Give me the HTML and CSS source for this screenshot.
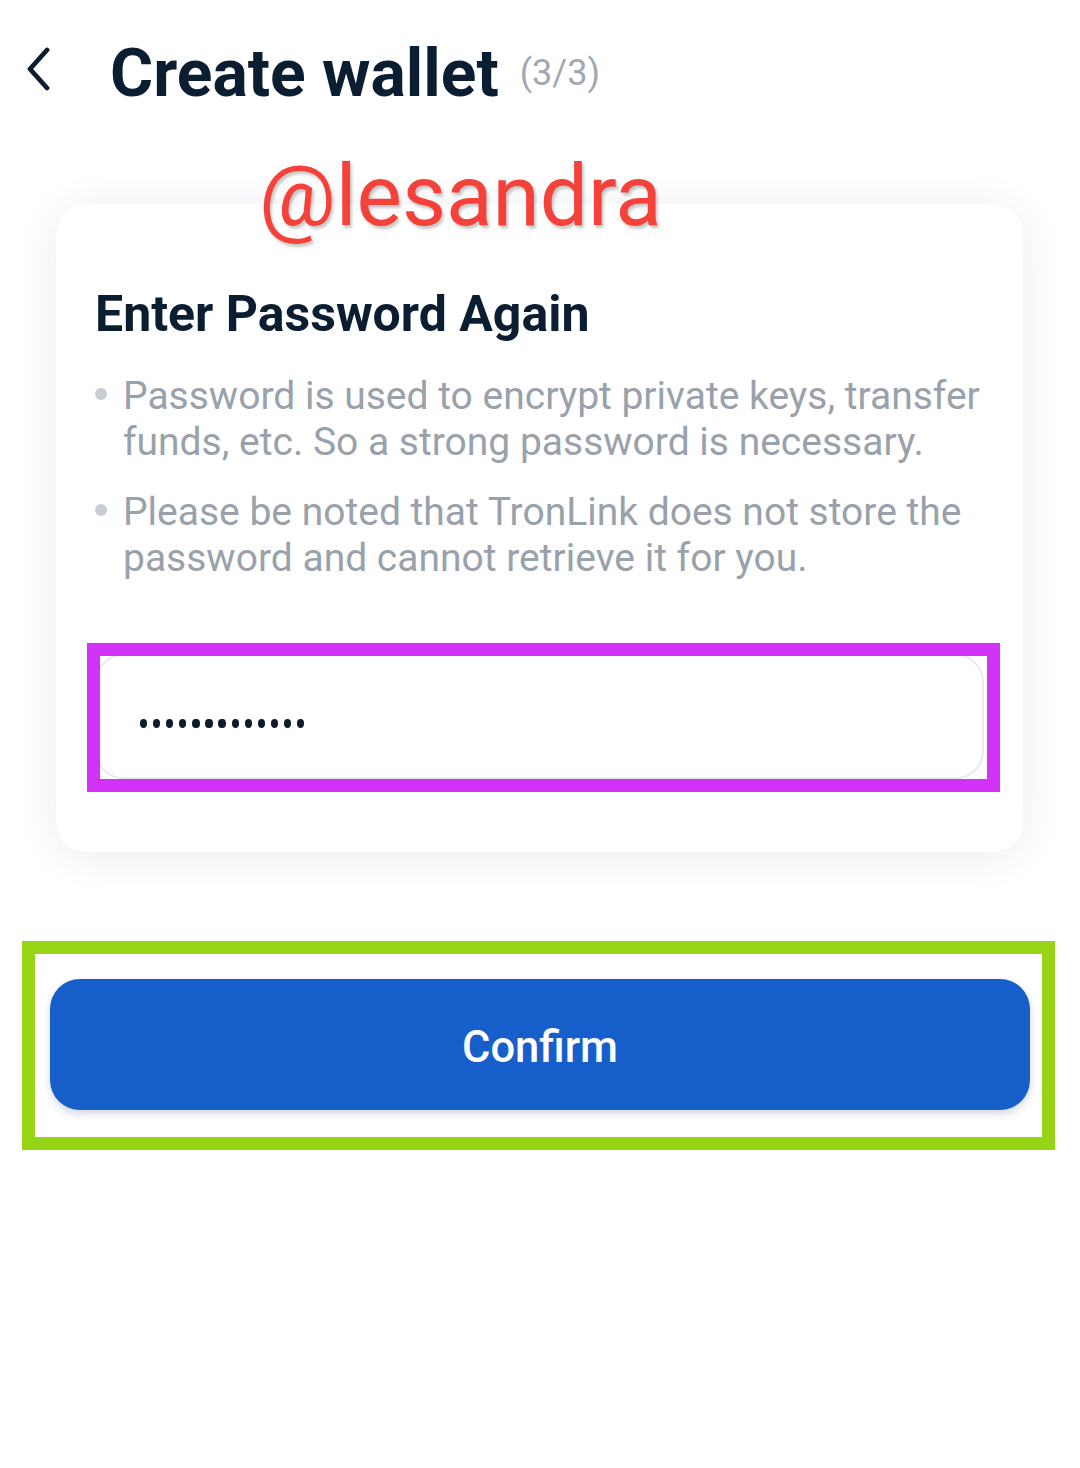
FILE: index.html
```html
<!DOCTYPE html>
<html lang="en">
<head>
<meta charset="utf-8">
<title>Create wallet</title>
<link rel="stylesheet" href="styles.css">
</head>
<body>
<div class="page">
  <header class="header">
    <svg class="back" width="24" height="44" viewBox="0 0 24 44" aria-hidden="true">
      <path d="M21 3 L4 22 L21 41" fill="none" stroke="#0d1d30" stroke-width="4.8" stroke-linecap="round" stroke-linejoin="round"/>
    </svg>
    <div class="title-group">
      <h1 class="title">Create wallet</h1>
      <span class="step">(3/3)</span>
    </div>
  </header>

  <section class="card">
    <h2 class="card-title">Enter Password Again</h2>
    <ul class="notes">
      <li class="note">Password is used to encrypt private keys, transfer funds, etc. So a strong password is necessary.</li>
      <li class="note">Please be noted that TronLink does not store the password and cannot retrieve it for you.</li>
    </ul>
    <div class="field">
      <div class="dots">
        <span class="dot"></span><span class="dot"></span><span class="dot"></span><span class="dot"></span><span class="dot"></span><span class="dot"></span><span class="dot"></span><span class="dot"></span><span class="dot"></span><span class="dot"></span><span class="dot"></span><span class="dot"></span><span class="dot"></span>
      </div>
    </div>
  </section>

  <button class="confirm" type="button">Confirm</button>

  <div class="watermark">@lesandra</div>
  <div class="frame frame-field"></div>
  <div class="frame frame-button"></div>
</div>
</body>
</html>
```

FILE: styles.css
```css
* {
  box-sizing: border-box;
}

html, body {
  margin: 0;
  padding: 0;
  background: #ffffff;
}

body {
  font-family: Roboto, "Noto Sans", "Liberation Sans", sans-serif;
  color: #0c1d31;
}

.page {
  position: relative;
  width: 1080px;
  height: 1468px;
  overflow: hidden;
  background: #ffffff;
}

/* Header */
.header {
  display: flex;
  align-items: flex-start;
  padding: 41px 0 0 26px;
  height: 106px;
}

.back {
  display: block;
  margin-top: 6px;
  flex: none;
}

.title-group {
  display: flex;
  align-items: baseline;
  margin-left: 60px;
}

.title {
  margin: 0;
  font-size: 66px;
  line-height: 65px;
  font-weight: 700;
  color: #0b1d31;
  letter-spacing: 0;
}

.step {
  margin-left: 21px;
  font-size: 36px;
  color: #a3a8b0;
  font-weight: 400;
  position: relative;
  top: -11px;
}

/* Card */
.card {
  margin: 98px 57px 0 56px;
  padding: 80px 39px 73px 39px;
  background: #ffffff;
  border-radius: 30px;
  box-shadow: 0 4px 40px rgba(40, 55, 110, 0.09);
}

.card-title {
  margin: 0;
  font-size: 50px;
  line-height: 60px;
  font-weight: 700;
  color: #0b1d31;
}

.notes {
  list-style: none;
  margin: 29px 0 0 0;
  padding: 0;
}

.note {
  position: relative;
  padding-left: 28px;
  font-size: 39px;
  line-height: 46px;
  color: #99a1ab;
}

.note + .note {
  margin-top: 24px;
}

.note::before {
  content: "";
  position: absolute;
  left: 0;
  top: 15px;
  width: 12px;
  height: 12px;
  border-radius: 50%;
  background: #c9cdd6;
}

.field {
  margin-top: 73px;
  height: 125px;
  border: 2px solid #e9eaee;
  border-radius: 28px;
  display: flex;
  align-items: center;
  padding: 14px 0 0 43px;
}

.dots {
  display: flex;
  gap: 5.9px;
}

.dot {
  width: 7.2px;
  height: 8.5px;
  border-radius: 50%;
  background: #0d1b2c;
}

/* Button */
.confirm {
  display: flex;
  align-items: center;
  justify-content: center;
  width: 980px;
  height: 131px;
  margin: 127px 0 0 50px;
  padding: 5px 0 0 0;
  border: none;
  border-radius: 30px;
  background: #165ec9;
  color: #ffffff;
  font-family: Roboto, "Noto Sans", "Liberation Sans", sans-serif;
  font-size: 43.5px;
  font-weight: 500;
  box-shadow: 0 4px 8px rgba(20, 40, 90, 0.18);
  cursor: pointer;
}

/* Annotations overlaid on the screenshot */
.watermark {
  position: absolute;
  left: 259px;
  top: 154px;
  font-size: 85.5px;
  line-height: 85px;
  font-weight: 400;
  color: #f4423a;
  text-shadow: 2px 3px 3px rgba(0, 0, 0, 0.22);
  white-space: nowrap;
}

.frame {
  position: absolute;
  border-style: solid;
  border-width: 13px;
  pointer-events: none;
}

.frame-field {
  left: 87px;
  top: 643px;
  width: 913px;
  height: 149px;
  border-color: #d232f5;
}

.frame-button {
  left: 22px;
  top: 941px;
  width: 1033px;
  height: 209px;
  border-color: #98d416;
}
```
